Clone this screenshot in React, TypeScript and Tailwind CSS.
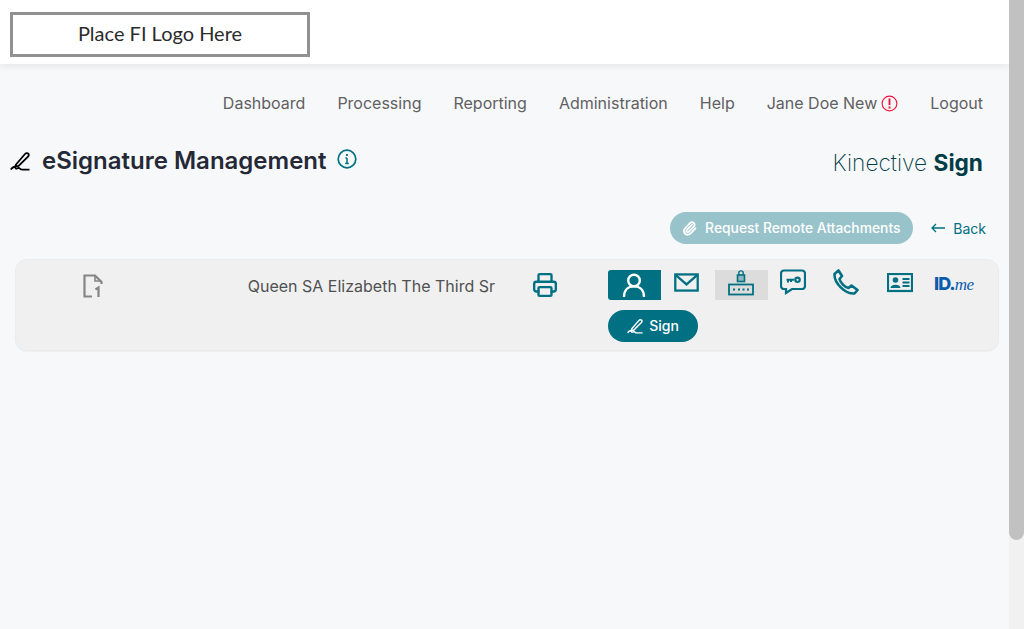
import { Paperclip, Printer } from "lucide-react";

const inter = { fontFamily: "Inter, sans-serif" };

function SignIcon({ className }: { className: string }) {
  return (
    <svg viewBox="0 0 20 20" fill="none" stroke="currentColor" strokeWidth="1.8" className={className}>
      <path d="M6 13.5 L15 3 C16 1.8 17.6 1.8 18.4 2.8 C19 3.8 18.8 4.8 18 5.7 L8.6 15 L5 15.8 Z" />
      <path d="M0.8 18.6 C3 15.4 5 15.4 5.5 17 C6 18.6 7.5 17 8.5 16.8 C10 16.6 9.5 18.6 12 18.6 L19.5 18.6" />
    </svg>
  );
}

function NavLinks() {
  const links = ["Dashboard", "Processing", "Reporting", "Administration", "Help"];
  return (
    <nav className="flex justify-end items-center gap-8 pr-[26px] h-[22px] mt-[28px] text-[16px] text-[#5f6062]">
      {links.map((link) => (
        <span key={link}>{link}</span>
      ))}
      <span className="flex items-center gap-[4px]">
        Jane Doe New
        <svg viewBox="0 0 18 18" className="w-[17px] h-[17px] text-[#f0163a]" fill="none" stroke="currentColor">
          <circle cx="9" cy="9" r="7.8" strokeWidth="1.2" />
          <path d="M9 3.6 V10.8" strokeWidth="2" />
          <path d="M9 12.2 V14.4" strokeWidth="2" />
        </svg>
      </span>
      <span>Logout</span>
    </nav>
  );
}

function VerifyIcons() {
  return (
    <div className="flex flex-col gap-[10px]">
      <div className="flex items-start">
        <div className="w-[53px] h-[30px] bg-[#007082] rounded-l-[3px] flex items-center justify-center text-white">
          <svg viewBox="0 0 24 24" fill="none" stroke="currentColor" strokeWidth="2.4" className="w-[24px] h-[24px] -ml-[1px]">
            <circle cx="12" cy="7.5" r="5.8" />
            <path d="M2 24 C2 17 6 13.4 12 13.4 C18 13.4 22 17 22 24" />
          </svg>
        </div>
        <div className="w-[54px] h-[30px] flex justify-center text-[#007082]">
          <svg viewBox="0 0 26 20" fill="none" stroke="currentColor" strokeWidth="2.4" className="w-[25px] h-[19px] mt-[3px] -ml-[3px]">
            <rect x="1.2" y="1.5" width="23.6" height="17" />
            <path d="M1.5 2 L13 12 L24.5 2" />
          </svg>
        </div>
        <div className="w-[53px] h-[30px] bg-[#dcdcdc] flex justify-center text-[#007082]">
          <svg viewBox="0 0 26 28" fill="none" stroke="currentColor" className="w-[26px] h-[28px] -mt-[1px] -ml-[2px]">
            <rect x="9.5" y="6" width="7" height="6.5" fill="currentColor" fillOpacity="0.35" strokeWidth="1.6" />
            <path d="M10.8 6 V3.8 C10.8 1.2 15.2 1.2 15.2 3.8 V6" strokeWidth="1.4" />
            <rect x="1" y="15.5" width="24" height="10" strokeWidth="1.8" />
            <path d="M5 20.5 H7 M10 20.5 H12 M14.5 20.5 H16.5 M19 20.5 H21" strokeWidth="2" />
          </svg>
        </div>
        <div className="w-[51px] flex justify-center text-[#007082]">
          <svg viewBox="0 0 26 26" fill="none" stroke="currentColor" strokeWidth="2.2" className="w-[26px] h-[26px] -mt-[1px] -ml-[1px]">
            <path d="M4 1.5 H22 C23.6 1.5 25 2.8 25 4.5 V17 C25 18.6 23.6 20 22 20 H12 L6 24 L6 20 H4 C2.4 20 1 18.6 1 17 V4.5 C1 2.8 2.4 1.5 4 1.5 Z" />
            <path d="M6.5 10.8 H14 M8 10.8 V13.5 M11 10.8 V13" strokeWidth="2" />
            <circle cx="17.5" cy="10.8" r="2.2" />
          </svg>
        </div>
        <div className="w-[54px] flex justify-center text-[#007082]">
          <svg viewBox="0 0 26 26" fill="none" stroke="currentColor" strokeWidth="2.6" className="w-[26px] h-[26px] -mt-[1px]">
            <path d="M5.5 1.5 L9 7 L6.5 10 C7.5 14 11.5 18 15.5 19 L18.5 16.5 L24.5 21 L21.5 24.5 C12 25 1 14 1.5 5 Z" strokeLinejoin="round" />
          </svg>
        </div>
        <div className="w-[54px] flex justify-center text-[#007082]">
          <svg viewBox="0 0 26 20" className="w-[26px] h-[20px] mt-[3px]">
            <rect x="1" y="1" width="24" height="17" fill="none" stroke="currentColor" strokeWidth="2.2" />
            <circle cx="8.5" cy="7" r="2.8" fill="currentColor" />
            <path d="M3.5 15 C3.5 10.6 13.5 10.6 13.5 15 Z" fill="currentColor" />
            <path d="M15.5 6 H22.5 M15.5 9.5 H22.5 M15.5 13 H22.5" stroke="currentColor" strokeWidth="1.8" />
          </svg>
        </div>
        <div className="pl-[7px] pt-[4px] h-[30px] flex items-baseline text-[#0b5cab] leading-[20px]">
          <span className="text-[18px] font-extrabold tracking-[-1px]">ID.</span>
          <span className="text-[17px] italic tracking-[-0.5px]" style={{ fontFamily: '"Liberation Serif", serif' }}>me</span>
        </div>
      </div>
      <button className="w-[90px] h-8 rounded-full bg-[#007082] text-white text-[14px] font-medium flex items-center justify-center gap-[6px] pb-px">
        <SignIcon className="w-4 h-4" />
        Sign
      </button>
    </div>
  );
}

export default function App() {
  return (
    <div className="flex h-[629px] overflow-hidden bg-[#f7f8fa]" style={inter}>
      <div className="flex-1 min-w-0">
        <header className="h-16 bg-white shadow-[0_2px_8px_rgba(0,0,0,0.08)] pl-[10px] pt-3">
          <div className="w-[300px] h-[45px] border-[3px] border-[#919191] flex items-center justify-center pb-1 text-[20px] text-[#2b2b2b]" style={{ fontFamily: "Lato, sans-serif" }}>
            Place FI Logo Here
          </div>
        </header>

        <NavLinks />

        <div className="flex items-start justify-between mt-[31px] pl-[10px] pr-[26px]">
          <div className="flex items-start">
            <SignIcon className="w-5 h-5 text-black mt-[6px]" />
            <h1 className="ml-3 text-[24px] leading-[32px] font-semibold text-[#252836]">eSignature Management</h1>
            <svg viewBox="0 0 20 20" fill="none" className="w-5 h-5 ml-[10px] mt-[4px] text-[#007082]" stroke="currentColor">
              <circle cx="10" cy="10" r="8.8" strokeWidth="1.7" />
              <path d="M10 9 V14.5 M8.2 14.5 H11.8 M8.4 9 H10" strokeWidth="1.5" />
              <path d="M10 5 V7" strokeWidth="1.8" />
            </svg>
          </div>
          <div className="text-[22.7px] leading-[32px] font-[250] text-[#003c45] mt-[2px]">
            Kinective <span className="font-bold">Sign</span>
          </div>
        </div>

        <div className="flex justify-end items-center mt-[33px] pr-[23px]">
          <button className="h-8 w-[243px] rounded-full bg-[#99c3cb] text-white text-[13.85px] font-medium flex items-center justify-center gap-2 pr-px">
            <Paperclip className="w-[15px] h-[15px]" strokeWidth={2.8} />
            Request Remote Attachments
          </button>
          <span className="flex items-center gap-2 ml-[18px] text-[14px] text-[#007082]">
            <svg viewBox="0 0 14 10" fill="none" stroke="currentColor" strokeWidth="1.3" className="w-[14px] h-[10px]">
              <path d="M14 5 H1 M5 1 L1 5 L5 9" />
            </svg>
            Back
          </span>
        </div>

        <div className="ml-[15px] mr-[10px] mt-[15px] h-[92px] rounded-[12px] bg-[#f0f0f0] border border-[#ececec] shadow-[0_1px_1px_rgba(0,0,0,0.04)] flex items-start pt-[10px]">
          <div className="w-[156px] flex justify-center text-[#858585]">
            <svg viewBox="0 0 20 24" fill="none" stroke="currentColor" strokeWidth="2.2" className="w-[22px] h-[24px] mt-[4px] -ml-[3px]">
              <path d="M9 22.5 H1.5 V1.5 H12 L18.5 8 V10" />
              <path d="M12 1.5 V7 H18" strokeWidth="1.6" />
              <path d="M12.5 15.5 L15.5 13.5 V23" strokeWidth="2.2" />
            </svg>
          </div>
          <div className="w-[323px] text-right text-[16px] leading-[32px] text-[#505050] whitespace-nowrap">
            Queen SA Elizabeth The Third Sr
          </div>
          <div className="w-[113px] pl-[37px] text-[#007082]">
            <Printer className="w-[26px] h-[26px] mt-[2px]" strokeWidth={2.2} />
          </div>
          <VerifyIcons />
        </div>
      </div>

      <aside className="w-[15px] bg-[#f1f1f1] shrink-0">
        <div className="h-[540px] bg-[#c1c1c1] rounded-b-[8px]" />
      </aside>
    </div>
  );
}
